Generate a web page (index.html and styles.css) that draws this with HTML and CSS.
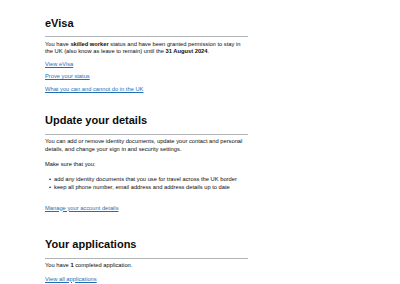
FILE: index.html
```html
<!DOCTYPE html>
<html lang="en">
<head>
<meta charset="utf-8">
<title>Your account</title>
<link rel="stylesheet" href="styles.css">
</head>
<body>
<main class="page">
  <section class="section section-evisa">
    <h2 class="heading">eVisa</h2>
    <p class="body intro">You have <strong>skilled worker</strong> status and have been granted permission to stay in the UK (also know as leave to remain) until the <strong>31 August 2024</strong>.</p>
    <p class="body link-row"><a class="link" href="#">View&nbsp;eVisa</a></p>
    <p class="body link-row"><a class="link" href="#">Prove your status</a></p>
    <p class="body link-row"><a class="link" href="#">What you can and cannot do in the UK</a></p>
  </section>

  <section class="section section-details">
    <h2 class="heading">Update your details</h2>
    <p class="body intro">You can add or remove identity documents, update your contact and personal details, and change your sign in and security settings.</p>
    <p class="body para">Make sure that you:</p>
    <ul class="bullets">
      <li>add any identity documents that you use for travel across the UK border</li>
      <li>keep all phone number, email address and address details up to date</li>
    </ul>
    <p class="body link-row"><a class="link" href="#">Manage your account details</a></p>
  </section>

  <section class="section section-apps">
    <h2 class="heading">Your applications</h2>
    <p class="body intro">You have <strong>1</strong> completed application.</p>
    <p class="body link-row"><a class="link" href="#">View all applications</a></p>
  </section>
</main>
</body>
</html>
```

FILE: styles.css
```css
html, body {
  margin: 0;
  padding: 0;
  background: #ffffff;
}

body {
  font-family: "Liberation Sans", Arial, sans-serif;
  color: #0b0c0c;
}

.page {
  width: 203px;
  padding: 16.7px 0 0 45px;
}

.section {
  margin: 0;
}

.heading {
  margin: 0;
  font-size: 11px;
  line-height: 12px;
  font-weight: 700;
  padding-bottom: 7.3px;
  border-bottom: 1px solid #b1b4b6;
}

.body {
  margin: 0;
  font-size: 5.75px;
  line-height: 7.8px;
}

.body strong {
  font-weight: 700;
}

.intro {
  margin-top: 3.6px;
}

.link-row {
  margin-top: 4.7px;
}

.para {
  margin-top: 7.2px;
}

.link {
  color: #1d70b8;
  text-decoration: underline;
  text-decoration-thickness: 0.5px;
  text-underline-offset: 1px;
}

.bullets {
  margin: 7.4px 0 0;
  padding: 0 0 0 9px;
  font-size: 5.75px;
  line-height: 7.6px;
  list-style: none;
}

.bullets li {
  position: relative;
}

.bullets li::before {
  content: "•";
  position: absolute;
  left: -5px;
  top: 0;
}

.section-details {
  margin-top: 20.5px;
}

.section-details .heading {
  padding-bottom: 7.8px;
}

.section-details .intro {
  margin-top: 3.3px;
  line-height: 7.9px;
}

.section-details .link-row {
  margin-top: 13px;
}

.section-apps {
  margin-top: 25.7px;
}

.section-apps .heading {
  padding-bottom: 7.8px;
}

.section-apps .intro {
  margin-top: 2.8px;
}

.section-apps .link-row {
  margin-top: 6.1px;
}
```
